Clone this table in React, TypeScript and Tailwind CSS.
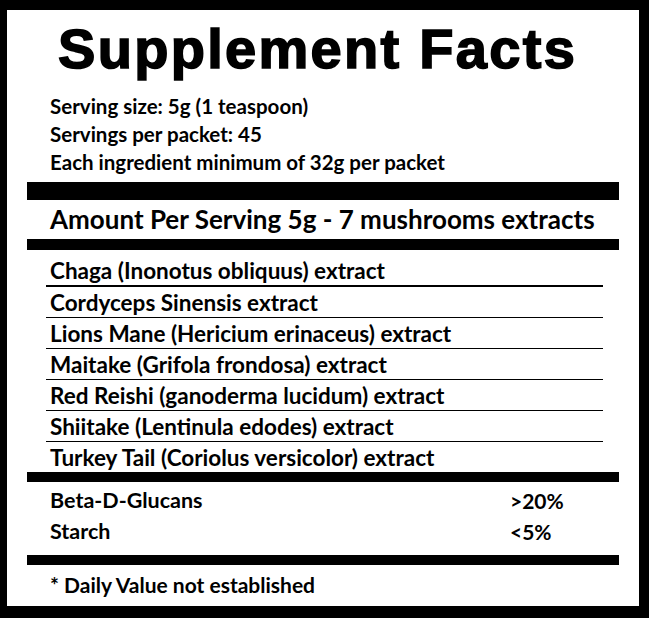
import React from "react";

const rows = [
  "Chaga (Inonotus obliquus) extract",
  "Cordyceps Sinensis extract",
  "Lions Mane (Hericium erinaceus) extract",
  "Maitake (Grifola frondosa) extract",
  "Red Reishi (ganoderma lucidum) extract",
  "Shiitake (Lentinula edodes) extract",
  "Turkey Tail (Coriolus versicolor) extract",
];

export default function App() {
  const body = { fontFamily: "Lato, 'Open Sans', sans-serif" };
  return (
    <div className="w-[649px] h-[618px] bg-black pt-[10px] pl-[7px] pr-[10px] pb-[12px]">
      <div className="w-full h-full bg-white flex flex-col text-black" style={body}>
        <div
          className="mt-[9px] h-[60px] leading-[60px] pl-[51px] text-[56px] font-bold tracking-[2.3px] whitespace-nowrap [-webkit-text-stroke:1.6px_black]"
          style={{ fontFamily: "'Liberation Sans', Arial, sans-serif" }}
        >
          Supplement Facts
        </div>
        <div className="mt-[13px] pl-[43px] text-[20.5px] font-bold leading-[28px]">
          <div>Serving size: 5g (1 teaspoon)</div>
          <div>Servings per packet: 45</div>
          <div>Each ingredient minimum of 32g per packet</div>
        </div>
        <div className="mt-[6px] mx-[20px] h-[18px] bg-black" />
        <div className="h-[39px] leading-[39px] pl-[43px] text-[26px] font-bold whitespace-nowrap">
          Amount Per Serving 5g - 7 mushrooms extracts
        </div>
        <div className="mx-[20px] h-[11px] bg-black" />
        <div className="ml-[39px] mr-[36px] flex flex-col">
          {rows.map((r, i) => (
            <div
              key={r}
              className={
                "flex items-end pl-[4px] text-[22.5px] font-bold " +
                (i === 0
                  ? "h-[37px] border-b-2 border-black"
                  : i === rows.length - 1
                  ? "h-[30px]"
                  : "h-[31px] border-b border-black")
              }
            >
              <span className="leading-[28px] whitespace-nowrap">{r}</span>
            </div>
          ))}
        </div>
        <div className="mx-[20px] h-[10px] bg-black" />
        <div className="mt-[3px] pl-[43px] text-[21.5px] font-bold leading-[31px]">
          <div className="flex">
            <span className="w-[460px]">Beta-D-Glucans</span>
            <span className="text-[21px]">&gt;20%</span>
          </div>
          <div className="flex">
            <span className="w-[460px]">Starch</span>
            <span className="text-[21px]">&lt;5%</span>
          </div>
        </div>
        <div className="mt-[8px] mx-[20px] h-[10px] bg-black" />
        <div className="mt-[6px] pl-[43px] text-[21px] font-bold leading-[28px]">
          * Daily Value not established
        </div>
      </div>
    </div>
  );
}
